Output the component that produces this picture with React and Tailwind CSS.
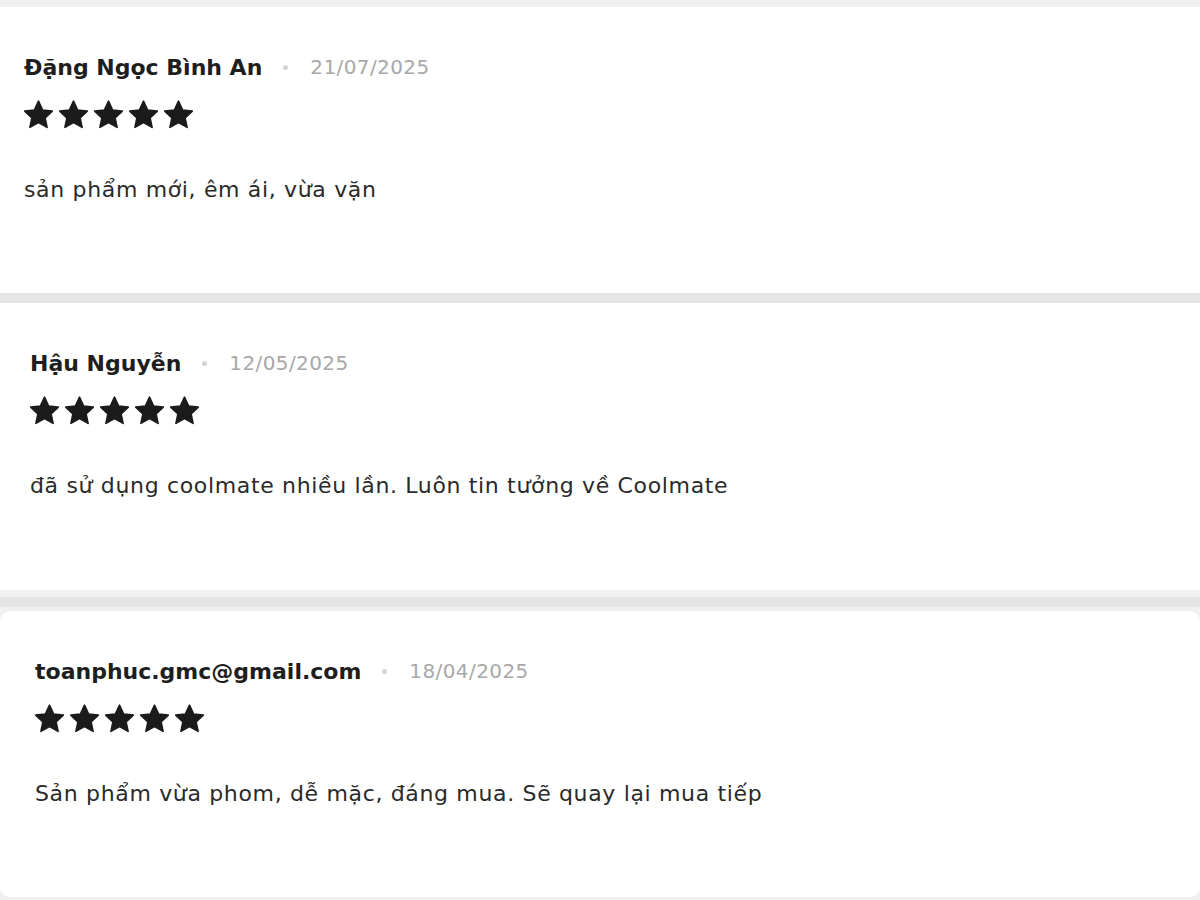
import React from 'react';

const reviews = [
  {
    name: 'Đặng Ngọc Bình An',
    date: '21/07/2025',
    text: 'sản phẩm mới, êm ái, vừa vặn',
    pad: 'pl-[24px]',
  },
  {
    name: 'Hậu Nguyễn',
    date: '12/05/2025',
    text: 'đã sử dụng coolmate nhiều lần. Luôn tin tưởng về Coolmate',
    pad: 'pl-[30px]',
  },
  {
    name: 'toanphuc.gmc@gmail.com',
    date: '18/04/2025',
    text: 'Sản phẩm vừa phom, dễ mặc, đáng mua. Sẽ quay lại mua tiếp',
    pad: 'pl-[35px]',
  },
];

const Star = () => (
  <svg width="33" height="32" viewBox="0 0 24 24" className="shrink-0">
    <path
      d="M12 1.6l3.1 6.7 7.25.8-5.4 5 1.5 7.2L12 17.7l-6.45 3.6 1.5-7.2-5.4-5 7.25-.8z"
      fill="#1b1b1b"
      stroke="#1b1b1b"
      strokeWidth="1.2"
      strokeLinejoin="round"
    />
  </svg>
);

const ReviewCard = ({ review, className }) => (
  <div className={`bg-white h-[286px] pt-[46px] ${review.pad} ${className || ''}`}>
    <div className="flex items-center h-[28px]">
      <span className="text-[22px] font-bold tracking-[0em] text-[#1e1e1e]">{review.name}</span>
      <span className="w-[5px] h-[5px] rounded-full bg-[#d4d4d4] ml-[21px] mr-[22px]" />
      <span className="text-[20px] tracking-[0.02em] text-[#a8a8a8]">{review.date}</span>
    </div>
    <div className="flex gap-[2px] mt-[18px] -ml-[2px]">
      {[0, 1, 2, 3, 4].map((i) => (
        <Star key={i} />
      ))}
    </div>
    <p className="mt-[45px] text-[22px] leading-[28px] tracking-[0.03em] text-[#2a2a2a]">{review.text}</p>
  </div>
);

export default function App() {
  return (
    <div
      className="w-[1200px] h-[900px] overflow-hidden bg-[#f0f0f0] pt-[7px]"
      style={{ fontFamily: '"DejaVu Sans", "Noto Sans", sans-serif' }}
    >
      <ReviewCard review={reviews[0]} />
      <div className="h-[10px] bg-[#e5e5e5]" />
      <ReviewCard review={reviews[1]} className="h-[287px]" />
      <div className="h-[7px] bg-[#f0f0f0]" />
      <div className="h-[10px] bg-[#e4e4e4]" />
      <div className="h-[4px] bg-[#f0f0f0]" />
      <ReviewCard review={reviews[2]} className="rounded-[10px]" />
    </div>
  );
}
